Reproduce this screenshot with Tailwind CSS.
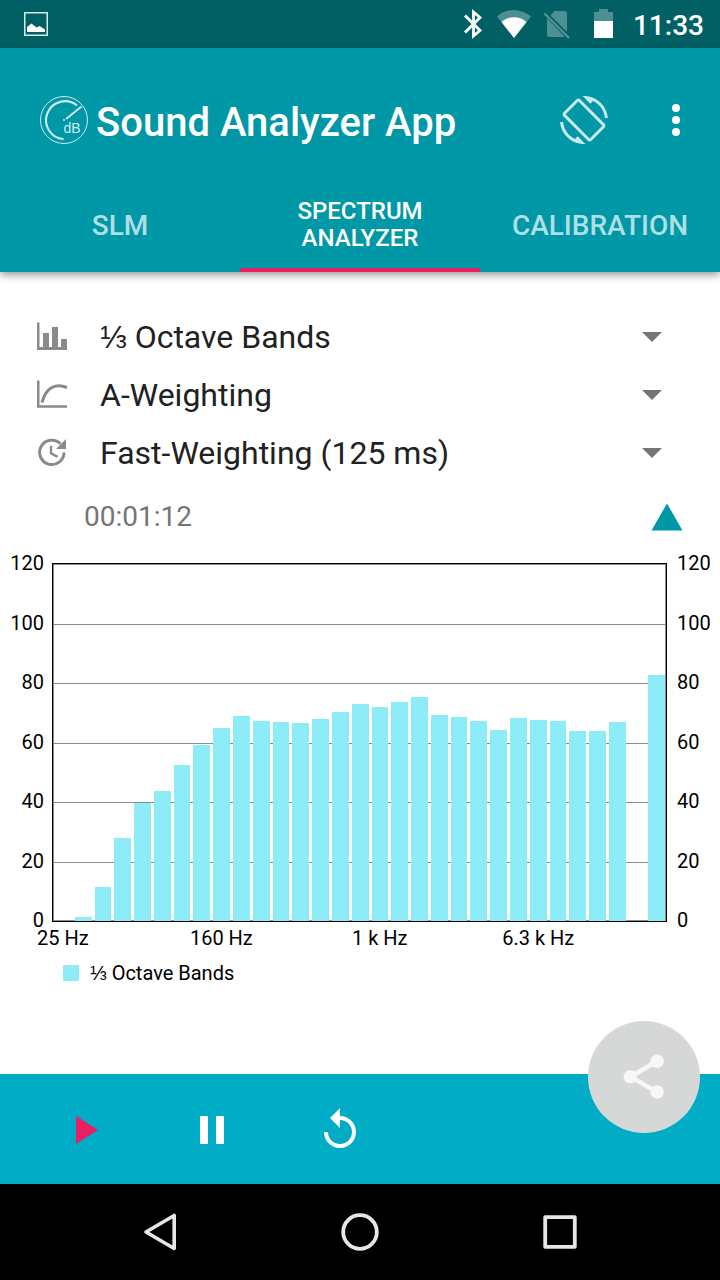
<!DOCTYPE html>
<html lang="en">
  <head>
    <meta charset="UTF-8" />
    <meta name="viewport" content="width=device-width, initial-scale=1.0" />
    <title>Sound Analyzer App</title>
    <script src="https://cdn.jsdelivr.net/npm/@tailwindcss/browser@4"></script>
  </head>
  <body
    class="min-h-screen flex flex-col bg-white font-['Roboto',sans-serif] select-none"
  >
    <!-- Status bar -->
    <div
      class="h-12 bg-[#006064] flex items-center justify-between pl-6 pr-4 text-white"
    >
      <svg class="size-6" viewBox="0 0 24 24" fill="none">
        <rect x="0.75" y="0.75" width="22.5" height="22.5" stroke="#dbe8e8" stroke-width="1.5" />
        <path d="M3 20v-5l4.500-3.500 5 4 3-1.500 5.500 3.500V20z" fill="#fff" />
      </svg>
      <div class="flex items-center">
        <svg class="w-5 h-8" viewBox="0 0 20 32" fill="none" stroke="#fff" stroke-width="2.800">
          <path d="M2 7.500 17 22.500l-6.500 5.500V4L17 9.500 2 24.500" />
        </svg>
        <svg class="w-9 h-8 ml-3" viewBox="0 0 36 32">
          <path d="M19 30 2 8.500C7 4.200 13 2 19 2s12 2.200 17 6.500z" fill="#4d9093" />
          <path d="M19 30 6.500 14C10 11 14 9.200 19 9.200S28 11 31.500 14z" fill="#fff" />
        </svg>
        <svg class="w-8 h-8 ml-2.5" viewBox="0 0 32 32">
          <path d="M13.500 3h10A2.500 2.500 0 0 1 26 5.500V24L9.500 7.500zM6 10 24 29H8.500A2.500 2.500 0 0 1 6 26.500z" fill="#4d9093" />
          <path d="m3.500 5.500 24.500 24.500" stroke="#4d9093" stroke-width="2.400" />
        </svg>
        <svg class="w-5 h-8 ml-[20px]" viewBox="0 0 20 32">
          <path d="M6 1h9v3h5v10H1V4h5z" fill="#4d9093" />
          <path d="M1 13h19v17H1z" fill="#fff" />
        </svg>
        <span class="pt-1 ml-5 text-[28px] leading-8 font-medium">11:33</span>
      </div>
    </div>

    <header class="relative bg-[#0097a7] text-white shadow-[0_3px_8px_rgba(0,0,0,0.4)]">
      <div class="h-32 pt-4 pl-10 pr-5 flex items-center">
        <svg class="size-12" viewBox="0 0 48 48" fill="none" stroke="#cceaed">
          <circle cx="24" cy="24" r="23.500" stroke-width="1" />
          <path d="M37 9.500A19 19 0 1 0 23.500 43.200" stroke-width="2.200" />
          <path d="M41.500 10.500 26 23" stroke-width="2" />
          <circle cx="24" cy="24" r="1" fill="#cceaed" stroke="none" />
          <text x="23.500" y="37" font-family="Liberation Sans, sans-serif" font-size="14" fill="#cceaed" stroke="none">dB</text>
        </svg>
        <h1 class="pt-1.5 ml-2 flex-1 text-[40px] leading-12 font-medium">Sound Analyzer App</h1>
        <button class="size-12" aria-label="Rotate screen">
          <svg class="size-12" viewBox="0 0 24 24" fill="#cceaed">
            <path d="M16.480 2.520c3.270 1.550 5.610 4.720 5.970 8.480h1.500C23.440 4.840 18.290 0 12 0l-.66.03 3.810 3.810 1.330-1.320zm-6.250-.77c-.59-.59-1.540-.59-2.120 0L1.750 8.110c-.59.59-.59 1.540 0 2.120l12.020 12.020c.59.59 1.540.59 2.120 0l6.360-6.360c.59-.59.59-1.540 0-2.120L10.230 1.750zm4.600 19.440L2.810 9.170l6.360-6.360 12.020 12.020-6.360 6.360zm-7.310.29C4.250 19.940 1.910 16.760 1.550 13H.05C.56 19.160 5.710 24 12 24l.66-.03-3.810-3.810-1.330 1.320z" />
          </svg>
        </button>
        <button class="ml-11 size-12" aria-label="More options">
          <svg class="size-12" viewBox="0 0 24 24" fill="#fff">
            <circle cx="12" cy="6" r="2" />
            <circle cx="12" cy="12" r="2" />
            <circle cx="12" cy="18" r="2" />
          </svg>
        </button>
      </div>
      <nav class="h-24 grid grid-cols-3 text-center font-medium">
        <a href="#slm" class="pt-1 flex items-center justify-center text-[28px] leading-8 text-white/70">SLM</a>
        <a
          href="#spectrum"
          class="pt-1.5 flex items-center justify-center border-b-4 border-[#e91e63] px-10 text-[24px] leading-[27px]"
          >SPECTRUM ANALYZER</a
        >
        <a href="#calibration" class="pt-1 flex items-center justify-center text-[28px] leading-8 text-white/70">CALIBRATION</a>
      </nav>
    </header>

    <main class="flex-1 pt-9">
      <div class="pl-9 pr-[58px] text-[32px] text-[#212121]">
        <div class="h-[58px] flex items-center">
          <label for="bands" aria-label="Bands">
            <svg class="size-8" viewBox="0 0 32 32" fill="#8a8a8a">
              <path d="M1 1.500h2.500V26H7V12h6v14h3V6h6v20h3v-8h6v11H1z" />
            </svg>
          </label>
          <div class="ml-8 flex-1 grid items-center">
            <select id="bands" class="col-start-1 row-start-1 w-full appearance-none">
              <option>⅓ Octave Bands</option>
              <option>Octave Bands</option>
            </select>
            <svg class="col-start-1 row-start-1 justify-self-end w-5 h-2.5 pointer-events-none" viewBox="0 0 20 10" fill="#757575">
              <path d="M0 0h20L10 10z" />
            </svg>
          </div>
        </div>
        <div class="h-[58px] flex items-center">
          <label for="frequency" aria-label="Frequency weighting">
            <svg class="size-8" viewBox="0 0 32 32" fill="none" stroke="#8a8a8a">
              <path d="M2.250 1.500v26H31" stroke-width="2.500" />
              <path d="M6 23.500C9.500 10 18 3.500 31 8.500" stroke-width="3" />
            </svg>
          </label>
          <div class="ml-8 flex-1 grid items-center">
            <select id="frequency" class="col-start-1 row-start-1 w-full appearance-none">
              <option>A-Weighting</option>
              <option>C-Weighting</option>
            </select>
            <svg class="col-start-1 row-start-1 justify-self-end w-5 h-2.5 pointer-events-none" viewBox="0 0 20 10" fill="#757575">
              <path d="M0 0h20L10 10z" />
            </svg>
          </div>
        </div>
        <div class="h-[58px] flex items-center">
          <label for="time" aria-label="Time weighting">
            <svg class="size-8" viewBox="0 0 32 32" fill="none" stroke="#8a8a8a">
              <path d="M28 15.500A12.200 12.200 0 1 1 24.500 6.800" stroke-width="3" />
              <path d="M15 8.700v7.500l6.500 3.700" stroke-width="2.400" />
              <path d="M30 2v10H20z" fill="#8a8a8a" stroke="none" />
            </svg>
          </label>
          <div class="ml-8 flex-1 grid items-center">
            <select id="time" class="col-start-1 row-start-1 w-full appearance-none">
              <option>Fast-Weighting (125 ms)</option>
              <option>Slow-Weighting (1 s)</option>
            </select>
            <svg class="col-start-1 row-start-1 justify-self-end w-5 h-2.5 pointer-events-none" viewBox="0 0 20 10" fill="#757575">
              <path d="M0 0h20L10 10z" />
            </svg>
          </div>
        </div>
      </div>

      <div class="h-[71px] pb-0.5 pl-[84px] pr-[37px] flex items-center justify-between">
        <time class="text-[28px] leading-8 text-[#757575]">00:01:12</time>
        <button aria-label="Collapse settings">
          <svg class="w-8 h-7" viewBox="0 0 32 28" fill="#0097a7">
            <path d="M16 0.500 31.500 27.500H0.500z" />
          </svg>
        </button>
      </div>

      <section class="flex text-xl text-black">
        <div class="mt-0.5 w-[52px] h-[373px] pr-2 flex flex-col justify-between text-right leading-4">
          <span>120</span><span>100</span><span>80</span><span>60</span
          ><span>40</span><span>20</span><span>0</span>
        </div>
        <div class="flex-1 pt-2.5">
          <div class="h-[359px] grid border border-black inset-shadow-[0_0_0_1px_#8c8c8c]">
            <div class="col-start-1 row-start-1 grid grid-rows-6">
              <div></div>
              <div class="border-t border-[#8c8c8c]"></div>
              <div class="border-t border-[#8c8c8c]"></div>
              <div class="border-t border-[#8c8c8c]"></div>
              <div class="border-t border-[#8c8c8c]"></div>
              <div class="border-t border-[#8c8c8c]"></div>
            </div>
            <div id="bars" class="col-start-1 row-start-1 flex items-end gap-[3px] pl-0.5 pr-px"></div>
          </div>
          <div class="mt-1.5 pl-px grid grid-cols-[repeat(31,minmax(0,1fr))] whitespace-nowrap leading-5">
            <span class="col-start-1 flex justify-center">25 Hz</span>
            <span class="col-start-9 flex justify-center">160 Hz</span>
            <span class="col-start-17 flex justify-center">1 k Hz</span>
            <span class="col-start-25 flex justify-center">6.3 k Hz</span>
          </div>
        </div>
        <div class="mt-0.5 w-[53px] h-[373px] pl-2.5 flex flex-col justify-between leading-4">
          <span>120</span><span>100</span><span>80</span><span>60</span
          ><span>40</span><span>20</span><span>0</span>
        </div>
      </section>
      <div class="mt-[15px] pl-[63px] flex items-center gap-[11px] text-xl leading-5 text-black">
        <span class="size-4 bg-[#8eebf8]"></span>
        <span>⅓ Octave Bands</span>
      </div>
    </main>

    <footer class="relative h-[110px] pt-0.5 pl-[60px] flex items-center gap-20 bg-[#00acc6]">
      <button aria-label="Play">
        <svg class="size-12" viewBox="0 0 24 24" fill="#e91e63">
          <path d="M8 5v14l11-7z" />
        </svg>
      </button>
      <button aria-label="Pause">
        <svg class="size-12" viewBox="0 0 24 24" fill="#fff">
          <path d="M6 19h4V5H6v14zm8-14v14h4V5h-4z" />
        </svg>
      </button>
      <button aria-label="Reset">
        <svg class="size-12" viewBox="0 0 24 24" fill="#fff">
          <path d="M12 5V1L7 6l5 5V7c3.310 0 6 2.690 6 6s-2.690 6-6 6-6-2.690-6-6H4c0 4.420 3.580 8 8 8s8-3.580 8-8-3.580-8-8-8z" />
        </svg>
      </button>
      <button
        class="absolute right-5 -top-[53px] size-28 rounded-full bg-[#d6d8d7] flex items-center justify-center"
        aria-label="Share"
      >
        <svg class="size-[54px]" viewBox="0 0 24 24" fill="#f7f7f7">
          <path d="M17.800 5 6 11.900 17.800 18.700" fill="none" stroke="#f7f7f7" stroke-width="2" />
          <circle cx="17.800" cy="5" r="3" />
          <circle cx="5.900" cy="11.900" r="3" />
          <circle cx="17.800" cy="18.700" r="3" />
        </svg>
      </button>
    </footer>

    <!-- Android navigation -->
    <div class="h-24 px-[60px] grid grid-cols-3 place-items-center bg-black">
      <button aria-label="Back">
        <svg class="size-10" viewBox="0 0 40 40" fill="none" stroke="#e6e6e6" stroke-width="3.600" stroke-linejoin="round">
          <path d="M6 20 34.200 3.500v33z" />
        </svg>
      </button>
      <button aria-label="Home">
        <svg class="size-10" viewBox="0 0 40 40" fill="none" stroke="#e6e6e6" stroke-width="3.800">
          <circle cx="20" cy="20" r="16.800" />
        </svg>
      </button>
      <button aria-label="Recent apps">
        <svg class="size-10" viewBox="0 0 40 40" fill="none" stroke="#e6e6e6" stroke-width="3.800" stroke-linejoin="round">
          <rect x="5.200" y="5.200" width="29.600" height="29.600" />
        </svg>
      </button>
    </div>

    <script>
      const maxLevel = 120;
      // dB per band, the last one is the overall level
      const levels = [
        0, 1.2, 11.4, 27.9, 39.7, 43.7, 52.4, 59.2, 64.9, 68.9, 67.2, 66.9,
        66.6, 67.9, 70.3, 72.9, 71.9, 73.6, 75.3, 69.2, 68.6, 67.2, 64.2, 68.2,
        67.6, 67.2, 63.9, 63.9, 66.9, 0, 82.7,
      ];
      const bars = document.getElementById("bars");
      levels.forEach((level) => {
        const bar = document.createElement("div");
        bar.classList.add("flex-1", "bg-[#8eebf8]");
        bar.style.height = `${(level / maxLevel) * 100}%`;
        bars.appendChild(bar);
      });
    </script>
  </body>
</html>
